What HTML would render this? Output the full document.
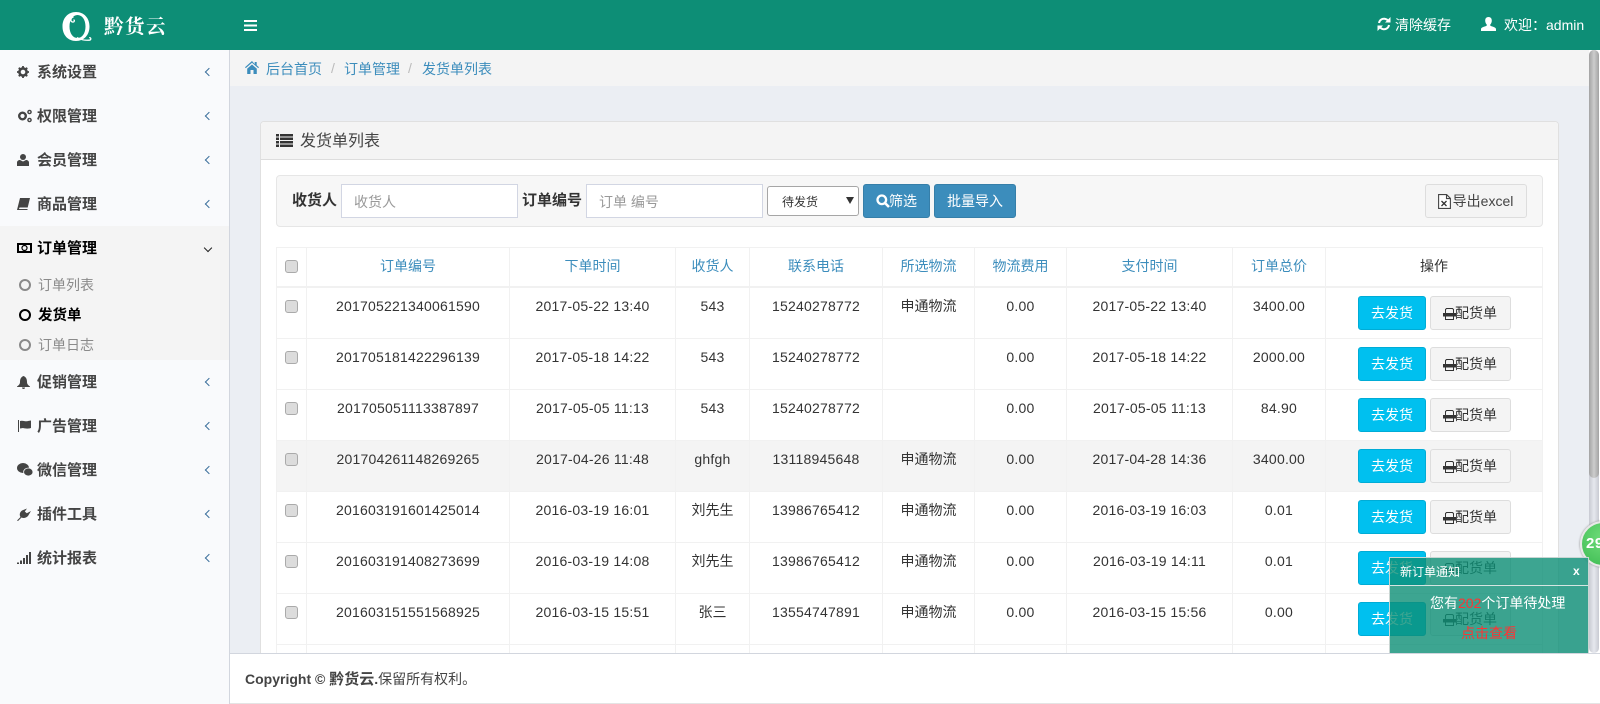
<!DOCTYPE html>
<html lang="zh"><head><meta charset="utf-8"><title>发货单列表</title>
<style>
*{box-sizing:border-box}
html,body{margin:0;padding:0;width:1600px;height:704px;overflow:hidden;background:#fff;font:14px/20px "Liberation Sans","Noto Sans CJK SC",sans-serif;color:#333}
.a{position:absolute}
svg{display:block;position:absolute}
#hd{left:0;top:0;width:1600px;height:50px;background:#0d8e76;color:#fff}
#sb{left:0;top:50px;width:230px;height:654px;background:#f9fafc;border-right:1px solid #d2d6de}
#open{left:0;top:226px;width:229px;height:134px;background:#f4f4f4}
.m{left:37px;width:120px;height:20px;font-weight:700;font-size:15px;color:#444;white-space:nowrap;margin-top:1px}
.s{left:38px;color:#8a8a8a;white-space:nowrap}
.c{left:206px;width:6px;height:6px;border-left:1px solid #3c6f9c;border-bottom:1px solid #3c6f9c;transform:rotate(45deg)}
#content{left:230px;top:50px;width:1359px;height:603px;background:#ebeef3}
#bc{left:230px;top:50px;width:1359px;height:36px;background:#f4f4f4;color:#3c8dbc}
#panel{left:260px;top:121px;width:1299px;height:540px;background:#fff;border:1px solid #e0e0e0;border-radius:4px 4px 0 0}
#ph{left:261px;top:122px;width:1297px;height:38px;background:#f4f4f4;border-bottom:1px solid #ddd;border-radius:4px 4px 0 0}
#filter{left:276px;top:175px;width:1267px;height:52px;background:#f7f7f7;border:1px solid #e6e6e6;border-radius:4px}
.inp{background:#fff;border:1px solid #d2d6e3;height:34px;color:#999;padding:7px 12px}
.btn{height:34px;border-radius:3px;text-align:center;line-height:33px;white-space:nowrap}
.blue{background:#3c8dbc;border:1px solid #367fa9;color:#fff}
table{position:absolute;left:276px;top:247px;width:1266px;border-collapse:collapse;table-layout:fixed}
td,th{border:1px solid #f1f1f1;text-align:center;vertical-align:top;padding:8px 0 0;font-weight:400;height:51px;white-space:nowrap;letter-spacing:.22px}
tr:nth-child(2) td{height:52px}
td.z,th{letter-spacing:0}
th{height:39px;border-bottom:2px solid #f1f1f1;padding:6px 0 0;color:#3c8dbc;line-height:24px}
th:last-child{color:#333}
tr.h td{background:#f4f4f4}
.cb{display:block;width:13px;height:13px;margin:4px 0 0 8px;background:#dcdcdc;border:1px solid #aaa;border-radius:3px}
th .cb{margin-top:6px}
.go{position:absolute;left:0;top:0;width:68px;height:34px;background:#00c0ef;border:1px solid #00acd6;border-radius:3px;color:#fff;line-height:33px;letter-spacing:0}
.pr{position:absolute;left:72px;top:0;width:81px;height:34px;background:#f4f4f4;border:1px solid #ddd;border-radius:3px;line-height:33px;padding-left:24px;text-align:left;letter-spacing:0}
.op{position:relative;display:block;height:34px;margin-left:32px}
#ft{left:230px;top:653px;width:1370px;height:51px;background:#fff;border-top:1px solid #d2d6de;border-bottom:1px solid #e4e4e4}
#track{left:1589px;top:50px;width:10px;height:603px;background:linear-gradient(90deg,#c8cad2,#e6e8ee 50%,#c8cad2);border-radius:5px}
#thumb{left:1589px;top:50px;width:10px;height:428px;background:linear-gradient(90deg,#a3a3a3,#cdcdcd 50%,#a3a3a3);border-radius:5px}
#ball{left:1580px;top:521px;width:46px;height:46px;border-radius:50%;background:radial-gradient(circle at 50% 35%,#6fdc7a,#3dbb52);border:2px solid #e8e8e8;box-shadow:0 0 2px #888;color:#fff;font-weight:700;font-size:15px;line-height:42px;padding-left:4px;letter-spacing:.5px}
#clipball{left:1570px;top:510px;width:30px;height:70px;overflow:hidden}
#pop{left:1389px;top:557px;width:200px;height:96px;background:rgba(13,142,118,.8);border:1px solid #c9d6d3;border-bottom:0;color:#fff}
</style></head><body>
<div class="a" id="content"></div>
<div class="a" id="bc">
<svg style="left:15px;top:11px" width="14" height="13" viewBox="0 0 14 13"><path fill="#3c8dbc" d="M7 0 0 6.200l.8.9L7 1.800l6.200 5.300.8-.9-2.300-2V1h-2v2.100zM2.200 7.600V13h3.300V9h3v4h3.300V7.600L7 3.500z"/></svg>
<span class="a" style="left:36px;top:9px;white-space:nowrap">后台首页</span>
<span class="a" style="left:101px;top:8px;color:#bbb">/</span>
<span class="a" style="left:114px;top:9px;white-space:nowrap">订单管理</span>
<span class="a" style="left:178px;top:8px;color:#bbb">/</span>
<span class="a" style="left:192px;top:9px;white-space:nowrap">发货单列表</span>
</div>
<div class="a" id="panel"></div>
<div class="a" id="ph">
<svg style="left:15px;top:12px" width="17" height="13" viewBox="0 0 17 13"><path fill="#333" d="M0 0h3v2.500H0zM4 0h13v2.500H4zM0 3.500h3V6H0zM4 3.500h13V6H4zM0 7h3v2.500H0zM4 7h13v2.500H4zM0 10.500h3V13H0zM4 10.500h13V13H4z"/></svg>
<span class="a" style="left:39px;top:10px;font-size:16px;line-height:20px;color:#444;white-space:nowrap">发货单列表</span>
</div>
<div class="a" id="filter"></div>
<b class="a" style="left:292px;top:191px;white-space:nowrap;font-size:15px">收货人</b>
<div class="a inp" style="left:341px;top:184px;width:177px">收货人</div>
<b class="a" style="left:522px;top:191px;white-space:nowrap;font-size:15px">订单编号</b>
<div class="a inp" style="left:586px;top:184px;width:177px">订单 编号</div>
<div class="a" style="left:767px;top:186px;width:92px;height:30px;background:#fff;border:1px solid #a6a6a6;border-radius:3px;font-size:12px;line-height:30px;padding-left:14px">待发货<span class="a" style="left:78px;top:10px;border:4px solid transparent;border-top:7px solid #333;border-bottom:0"></span></div>
<div class="a btn blue" style="left:863px;top:184px;width:67px;padding-left:13px">筛选
<svg style="left:12px;top:9px" width="14" height="14" viewBox="0 0 14 14"><circle cx="5.800" cy="5.800" r="4.300" fill="none" stroke="#fff" stroke-width="2.300"/><path d="M9 9l4 4" stroke="#fff" stroke-width="2.600"/></svg></div>
<div class="a btn blue" style="left:934px;top:184px;width:82px">批量导入</div>
<div class="a btn" style="left:1425px;top:184px;width:102px;background:#f4f4f4;border:1px solid #ddd;color:#444;padding-left:14px">导出excel
<svg style="left:12px;top:9px" width="13" height="15" viewBox="0 0 13 15"><path d="M.6.600h8l3.800 3.800v10H.6zM8.500.600v4h4" fill="#fff" stroke="#444" stroke-width="1.100"/><path d="M3.500 7l5 5M8.500 7l-5 5" stroke="#333" stroke-width="1.300"/></svg></div>

<table>
<colgroup><col style="width:30px"><col style="width:203px"><col style="width:166px"><col style="width:74px"><col style="width:133px"><col style="width:92px"><col style="width:92px"><col style="width:166px"><col style="width:93px"><col style="width:217px"></colgroup>
<tr><th><i class="cb"></i></th><th>订单编号</th><th>下单时间</th><th>收货人</th><th>联系电话</th><th>所选物流</th><th>物流费用</th><th>支付时间</th><th>订单总价</th><th>操作</th></tr>
<tr><td><i class="cb"></i></td><td>201705221340061590</td><td>2017-05-22 13:40</td><td>543</td><td>15240278772</td><td class="z">申通物流</td><td>0.00</td><td>2017-05-22 13:40</td><td>3400.00</td><td><span class="op"><span class="go">去发货</span><span class="pr">配货单<svg style="left:12px;top:11px" width="13" height="12" viewBox="0 0 13 12"><path fill="none" stroke="#333" d="M2.500 6V1.500l1-1h6l1 1V6M2.500 8.500v3h8v-3"/><path fill="#333" d="M0 5h13v3.500H0z"/></svg></span></span></td></tr>
<tr><td><i class="cb"></i></td><td>201705181422296139</td><td>2017-05-18 14:22</td><td>543</td><td>15240278772</td><td></td><td>0.00</td><td>2017-05-18 14:22</td><td>2000.00</td><td><span class="op"><span class="go">去发货</span><span class="pr">配货单<svg style="left:12px;top:11px" width="13" height="12" viewBox="0 0 13 12"><path fill="none" stroke="#333" d="M2.500 6V1.500l1-1h6l1 1V6M2.500 8.500v3h8v-3"/><path fill="#333" d="M0 5h13v3.500H0z"/></svg></span></span></td></tr>
<tr><td><i class="cb"></i></td><td>201705051113387897</td><td>2017-05-05 11:13</td><td>543</td><td>15240278772</td><td></td><td>0.00</td><td>2017-05-05 11:13</td><td>84.90</td><td><span class="op"><span class="go">去发货</span><span class="pr">配货单<svg style="left:12px;top:11px" width="13" height="12" viewBox="0 0 13 12"><path fill="none" stroke="#333" d="M2.500 6V1.500l1-1h6l1 1V6M2.500 8.500v3h8v-3"/><path fill="#333" d="M0 5h13v3.500H0z"/></svg></span></span></td></tr>
<tr class="h"><td><i class="cb"></i></td><td>201704261148269265</td><td>2017-04-26 11:48</td><td>ghfgh</td><td>13118945648</td><td class="z">申通物流</td><td>0.00</td><td>2017-04-28 14:36</td><td>3400.00</td><td><span class="op"><span class="go">去发货</span><span class="pr">配货单<svg style="left:12px;top:11px" width="13" height="12" viewBox="0 0 13 12"><path fill="none" stroke="#333" d="M2.500 6V1.500l1-1h6l1 1V6M2.500 8.500v3h8v-3"/><path fill="#333" d="M0 5h13v3.500H0z"/></svg></span></span></td></tr>
<tr><td><i class="cb"></i></td><td>201603191601425014</td><td>2016-03-19 16:01</td><td class="z">刘先生</td><td>13986765412</td><td class="z">申通物流</td><td>0.00</td><td>2016-03-19 16:03</td><td>0.01</td><td><span class="op"><span class="go">去发货</span><span class="pr">配货单<svg style="left:12px;top:11px" width="13" height="12" viewBox="0 0 13 12"><path fill="none" stroke="#333" d="M2.500 6V1.500l1-1h6l1 1V6M2.500 8.500v3h8v-3"/><path fill="#333" d="M0 5h13v3.500H0z"/></svg></span></span></td></tr>
<tr><td><i class="cb"></i></td><td>201603191408273699</td><td>2016-03-19 14:08</td><td class="z">刘先生</td><td>13986765412</td><td class="z">申通物流</td><td>0.00</td><td>2016-03-19 14:11</td><td>0.01</td><td><span class="op"><span class="go">去发货</span><span class="pr">配货单<svg style="left:12px;top:11px" width="13" height="12" viewBox="0 0 13 12"><path fill="none" stroke="#333" d="M2.500 6V1.500l1-1h6l1 1V6M2.500 8.500v3h8v-3"/><path fill="#333" d="M0 5h13v3.500H0z"/></svg></span></span></td></tr>
<tr><td><i class="cb"></i></td><td>201603151551568925</td><td>2016-03-15 15:51</td><td class="z">张三</td><td>13554747891</td><td class="z">申通物流</td><td>0.00</td><td>2016-03-15 15:56</td><td>0.00</td><td><span class="op"><span class="go">去发货</span><span class="pr">配货单<svg style="left:12px;top:11px" width="13" height="12" viewBox="0 0 13 12"><path fill="none" stroke="#333" d="M2.500 6V1.500l1-1h6l1 1V6M2.500 8.500v3h8v-3"/><path fill="#333" d="M0 5h13v3.500H0z"/></svg></span></span></td></tr>
<tr><td></td><td></td><td></td><td></td><td></td><td></td><td></td><td></td><td></td><td></td></tr>
</table>

<div class="a" id="track"></div><div class="a" id="thumb"></div>
<div class="a" id="ft"><div class="a" style="left:15px;top:15px;white-space:nowrap;color:#444"><b>Copyright © <span style="font-size:15px">黔货云</span>.</b>保留所有权利。</div></div>

<div class="a" id="sb"></div>
<div class="a" id="open"></div>
<div class="a m" style="top:62px">系统设置</div><i class="a c" style="top:69px"></i>
<div class="a m" style="top:106px">权限管理</div><i class="a c" style="top:113px"></i>
<div class="a m" style="top:150px">会员管理</div><i class="a c" style="top:157px"></i>
<div class="a m" style="top:194px">商品管理</div><i class="a c" style="top:201px"></i>
<div class="a m" style="top:238px;color:#000">订单管理</div>
<i class="a c" style="top:245px;left:205px;transform:rotate(-45deg);border-color:#222"></i>
<div class="a s" style="top:275px">订单列表</div>
<div class="a s" style="top:306px;color:#000;font-weight:700;font-size:14.500px">发货单</div>
<div class="a s" style="top:335px">订单日志</div>
<i class="a" style="left:19px;top:279px;width:12px;height:12px;border:2px solid #8a8a8a;border-radius:50%"></i>
<i class="a" style="left:19px;top:309px;width:12px;height:12px;border:2px solid #000;border-radius:50%"></i>
<i class="a" style="left:19px;top:339px;width:12px;height:12px;border:2px solid #8a8a8a;border-radius:50%"></i>
<div class="a m" style="top:372px">促销管理</div><i class="a c" style="top:379px"></i>
<div class="a m" style="top:416px">广告管理</div><i class="a c" style="top:423px"></i>
<div class="a m" style="top:460px">微信管理</div><i class="a c" style="top:467px"></i>
<div class="a m" style="top:504px">插件工具</div><i class="a c" style="top:511px"></i>
<div class="a m" style="top:548px">统计报表</div><i class="a c" style="top:555px"></i>

<svg style="left:17px;top:66px" width="12" height="12" viewBox="0 0 12 12"><circle cx="6" cy="6" r="3.600" fill="none" stroke="#444" stroke-width="2.600"/><path d="M6 0v12M0 6h12M1.800 1.800l8.400 8.400M10.200 1.800l-8.400 8.400" stroke="#444" stroke-width="1.800" stroke-dasharray="2 8 2"/></svg>
<svg style="left:17px;top:109px" width="15" height="14" viewBox="0 0 15 14"><circle cx="5.500" cy="7" r="3.300" fill="none" stroke="#444" stroke-width="2.400"/><circle cx="12.500" cy="3" r="1.600" fill="none" stroke="#444" stroke-width="1.400"/><circle cx="12.500" cy="11" r="1.600" fill="none" stroke="#444" stroke-width="1.400"/></svg>
<svg style="left:17px;top:154px" width="12" height="12" viewBox="0 0 12 12"><circle cx="6" cy="3" r="3" fill="#444"/><path fill="#444" d="M0 12V8.500C0 7 1.500 6 3 6l3 1.500L9 6c1.500 0 3 1 3 2.500V12z"/></svg>
<svg style="left:17px;top:198px" width="13" height="12" viewBox="0 0 13 12"><path fill="#444" d="M3 0h10l-2.300 9.500H2.500L2 11h8.500v1H0L3 0z"/></svg>
<svg style="left:17px;top:243px" width="15" height="10" viewBox="0 0 15 10"><path fill-rule="evenodd" fill="#000" d="M0 0h15v10H0zM2 2v6h11V2z"/><circle cx="7.500" cy="5" r="2.500" fill="none" stroke="#000" stroke-width="1.200"/></svg>
<svg style="left:17px;top:376px" width="13" height="13" viewBox="0 0 13 13"><path fill="#444" d="M6.500 0C9 1 10 3 10 6c0 2 1 3 3 4.500V11H0v-.5C2 9 3 8 3 6c0-3 1-5 3.500-6zM5 11.500h3A1.500 1.500 0 0 1 5 11.500z"/></svg>
<svg style="left:18px;top:420px" width="13" height="12" viewBox="0 0 13 12"><path fill="#444" d="M0 0h1v12H0zM2 1c3-1 5 1 8 0l3-.5V8c-3 1-6 .5-8 0l-3 .5z"/></svg>
<svg style="left:17px;top:463px" width="16" height="14" viewBox="0 0 16 14"><ellipse cx="6" cy="5" rx="6" ry="5" fill="#444"/><ellipse cx="11.300" cy="9" rx="4.700" ry="4" fill="#444" stroke="#f9fafc" stroke-width=".8"/></svg>
<svg style="left:17px;top:507px" width="14" height="14" viewBox="0 0 14 14"><path fill="#444" d="M0 13.500 3.500 10C2 7.500 3 5 5 3.500L10 1.500 7.800 4.500l2 1.700L14 4 11 9c-2 2-4.500 2.500-6.500 1.500L1 14z"/></svg>
<svg style="left:17px;top:552px" width="14" height="12" viewBox="0 0 14 12"><path fill="#444" d="M0 10.500h2V12H0zM3 8.500h2V12H3zM6 6h2v6H6zM9 3h2v9H9zM12 0h2v12h-2z"/></svg>

<div class="a" id="hd">
<svg style="left:60px;top:11px" width="34" height="32" viewBox="0 0 34 32"><path fill="#fff" fill-rule="evenodd" d="M16 1C8 1 2.500 7 2.500 15.500S8 30 16 30s13.500-6 13.500-14.500S24 1 16 1zM17.500 4c4.500 0 8 4.500 8 11.500s-3.500 11.500-8 11.500-8-4.500-8-11.500S13 4 17.500 4z"/><path fill="none" stroke="#fff" stroke-width="1.300" d="M13.500 6c-3 .5-3.500 4.500-1 5 2 .3 2.500-1.800 1-2.300M17 26.500c3 2 8 3 12 2.700 2.500-.2 2.300-3 .2-2.500"/></svg>
<div class="a" style="left:104px;top:13px;font:700 19.500px/24px 'Noto Serif CJK SC',serif;letter-spacing:1.500px;white-space:nowrap">黔货云</div>
<svg style="left:244px;top:20px" width="13" height="11" viewBox="0 0 13 11"><path fill="#fff" d="M0 0h13v2H0zM0 4.500h13v2H0zM0 9h13v2H0z"/></svg>
<svg style="left:1377px;top:17px" width="14" height="14" viewBox="0 0 14 14"><path fill="none" stroke="#fff" stroke-width="2" d="M2 6c.5-3 3-4.500 5.500-4.200 1.500.2 3 1 4 2.500M12 8c-.5 3-3 4.500-5.500 4.200-1.500-.2-3-1-4-2.500"/><path fill="#fff" d="M13.500 0v5.500H8zM.5 14V8.500H6z"/></svg>
<span class="a" style="left:1395px;top:15px;white-space:nowrap">清除缓存</span>
<svg style="left:1481px;top:17px" width="15" height="14" viewBox="0 0 15 14"><path fill="#fff" d="M7.500 0c2.200 0 3.300 1.500 3.300 3.600 0 1.500-.6 3-1.500 3.800v1.300c1.500.8 5.700 1.500 5.700 3.300v2H0v-2c0-1.800 4.200-2.500 5.700-3.300V7.400C4.800 6.600 4.200 5.100 4.200 3.600 4.200 1.500 5.300 0 7.500 0z"/></svg>
<span class="a" style="left:1504px;top:15px;white-space:nowrap">欢迎<span style="font-family:'Noto Sans CJK TC',sans-serif">：</span>admin</span>
</div>

<div class="a" id="clipball"><div class="a" id="ball" style="left:10px;top:11px">29</div></div>
<div class="a" id="pop">
<span class="a" style="left:10px;top:4px;font-size:12px;line-height:20px;white-space:nowrap">新订单通知</span>
<b class="a" style="left:183px;top:3px;font-size:12px;line-height:20px">x</b>
<i class="a" style="left:0;top:27px;width:198px;height:1px;background:#d5e5e1"></i>
<span class="a" style="left:40px;top:35px;font-size:14px;line-height:20px;white-space:nowrap">您有<span style="color:#f33">202</span>个订单待处理</span>
<span class="a" style="left:71px;top:65px;color:#f33;white-space:nowrap">点击查看</span>
</div>
</body></html>
